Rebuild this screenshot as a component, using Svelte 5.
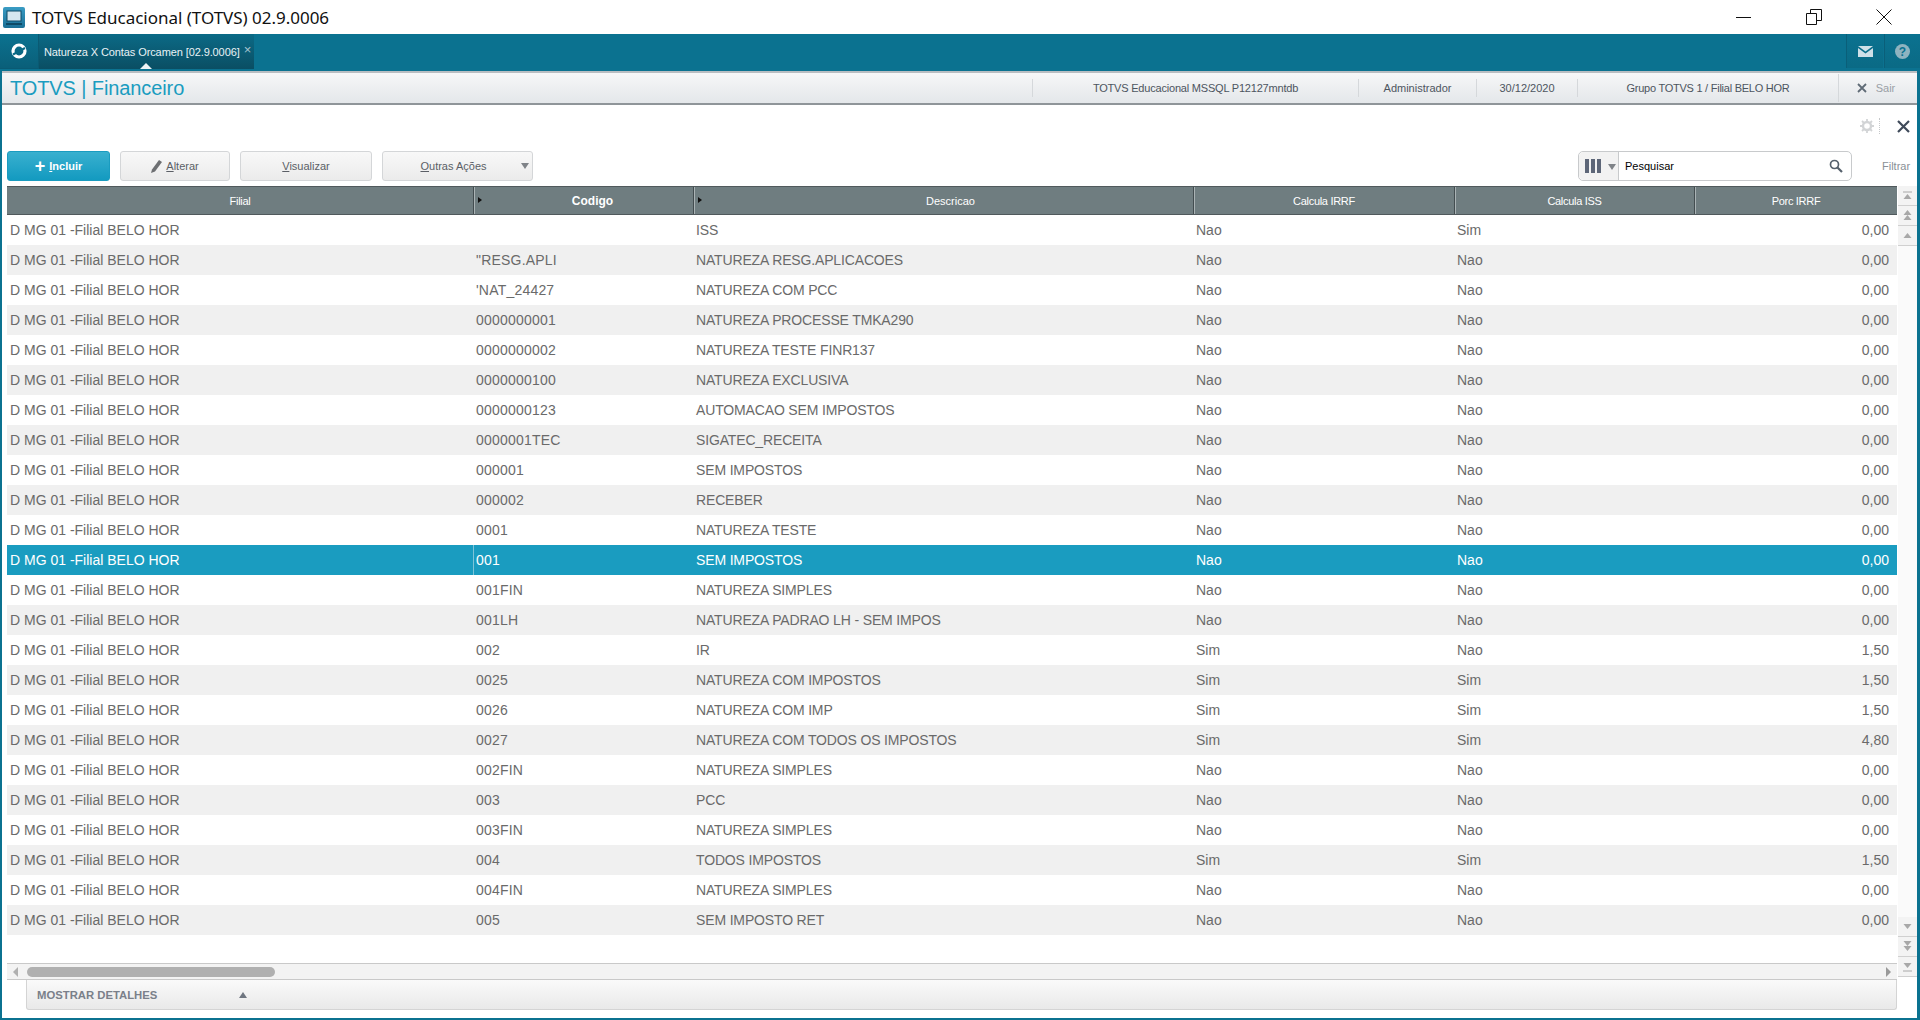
<script>
  const cols = ['Filial', 'Codigo', 'Descricao', 'Calcula IRRF', 'Calcula ISS', 'Porc IRRF'];
  const rows = [
    ['', 'ISS', 'Nao', 'Sim', '0,00'],
    ['"RESG.APLI', 'NATUREZA RESG.APLICACOES', 'Nao', 'Nao', '0,00'],
    ["'NAT_24427", 'NATUREZA COM PCC', 'Nao', 'Nao', '0,00'],
    ['0000000001', 'NATUREZA PROCESSE TMKA290', 'Nao', 'Nao', '0,00'],
    ['0000000002', 'NATUREZA TESTE FINR137', 'Nao', 'Nao', '0,00'],
    ['0000000100', 'NATUREZA EXCLUSIVA', 'Nao', 'Nao', '0,00'],
    ['0000000123', 'AUTOMACAO SEM IMPOSTOS', 'Nao', 'Nao', '0,00'],
    ['0000001TEC', 'SIGATEC_RECEITA', 'Nao', 'Nao', '0,00'],
    ['000001', 'SEM IMPOSTOS', 'Nao', 'Nao', '0,00'],
    ['000002', 'RECEBER', 'Nao', 'Nao', '0,00'],
    ['0001', 'NATUREZA TESTE', 'Nao', 'Nao', '0,00'],
    ['001', 'SEM IMPOSTOS', 'Nao', 'Nao', '0,00'],
    ['001FIN', 'NATUREZA SIMPLES', 'Nao', 'Nao', '0,00'],
    ['001LH', 'NATUREZA PADRAO LH - SEM IMPOS', 'Nao', 'Nao', '0,00'],
    ['002', 'IR', 'Sim', 'Nao', '1,50'],
    ['0025', 'NATUREZA COM IMPOSTOS', 'Sim', 'Sim', '1,50'],
    ['0026', 'NATUREZA COM IMP', 'Sim', 'Sim', '1,50'],
    ['0027', 'NATUREZA COM TODOS OS IMPOSTOS', 'Sim', 'Sim', '4,80'],
    ['002FIN', 'NATUREZA SIMPLES', 'Nao', 'Nao', '0,00'],
    ['003', 'PCC', 'Nao', 'Nao', '0,00'],
    ['003FIN', 'NATUREZA SIMPLES', 'Nao', 'Nao', '0,00'],
    ['004', 'TODOS IMPOSTOS', 'Sim', 'Sim', '1,50'],
    ['004FIN', 'NATUREZA SIMPLES', 'Nao', 'Nao', '0,00'],
    ['005', 'SEM IMPOSTO RET', 'Nao', 'Nao', '0,00'],
  ];
</script>

<div class="win">
  <header class="title">
    <svg class="appicon" width="22" height="21" viewBox="0 0 22 21">
      <defs><linearGradient id="ai" x1="0" y1="0" x2="0" y2="1"><stop offset="0" stop-color="#3a9cc4" /><stop offset="1" stop-color="#1a6f96" /></linearGradient></defs>
      <rect width="22" height="21" rx="2" fill="url(#ai)" />
      <rect x="4" y="4" width="14" height="10" fill="#d5e6ef" stroke="#0e4a66" />
      <path d="M3 17h16" stroke="#0e4a66" stroke-width="2" />
    </svg>
    <span class="apptitle">TOTVS Educacional (TOTVS) 02.9.0006</span>
    <div class="winbtns">
      <svg width="16" height="16" viewBox="0 0 16 16"><path d="M0 8.500h15" stroke="#111" fill="none" /></svg>
      <svg width="16" height="16" viewBox="0 0 16 16"><path d="M.5 4.500h10v11H.5zM4.500 4.500V.5h11v11h-5" stroke="#111" fill="none" /></svg>
      <svg width="16" height="16" viewBox="0 0 16 16"><path d="M.5.5l15 15M15.500.5l-15 15" stroke="#111" fill="none" /></svg>
    </div>
  </header>

  <div class="body">
    <nav class="tabs">
      <div class="logo">
        <svg width="16" height="16" viewBox="0 0 16 16">
          <circle cx="8" cy="8" r="6" fill="none" stroke="#fff" stroke-width="3.200" />
          <path d="M2 11.500L14 5" stroke="#0a6a85" stroke-width="2" />
        </svg>
      </div>
      <div class="tab">
        <span class="tabtext">Natureza X Contas Orcamen [02.9.0006]</span>
        <span class="tabx">×</span>
        <i class="caret"></i>
      </div>
      <div class="navright">
        <div class="navbtn">
          <svg width="15" height="11" viewBox="0 0 15 11"><path d="M0 0h15L7.500 5.500z" fill="#cfe0e8" /><path d="M0 2l7.500 5.500L15 2v9H0z" fill="#cfe0e8" /></svg>
        </div>
        <div class="navbtn">
          <svg width="15" height="15" viewBox="0 0 15 15"><circle cx="7.500" cy="7.500" r="7.500" fill="#8fb3c0" /><text x="7.500" y="12" text-anchor="middle" class="qm">?</text></svg>
        </div>
      </div>
    </nav>

    <div class="module">
      <div class="modname">TOTVS | Financeiro</div>
      <div class="cell c1">TOTVS Educacional MSSQL P12127mntdb</div>
      <div class="cell c2">Administrador</div>
      <div class="cell c3">30/12/2020</div>
      <div class="cell c4">Grupo TOTVS 1 / Filial BELO HOR</div>
      <div class="cell c5">
        <svg width="10" height="10" viewBox="0 0 10 10"><path d="M1 1l8 8M9 1l-8 8" stroke="#5f6b76" stroke-width="1.800" /></svg>
        <span>Sair</span>
      </div>
    </div>

    <div class="tools">
      <svg width="14" height="14" viewBox="0 0 14 14" class="gear">
        <circle cx="7" cy="7" r="4" fill="none" stroke="#d2d4d6" stroke-width="2.400" />
        <path d="M7 0v3M7 11v3M0 7h3M11 7h3M2 2l2 2M10 10l2 2M12 2l-2 2M4 10l-2 2" stroke="#d2d4d6" stroke-width="1.800" />
      </svg>
      <i class="dots"></i>
      <svg width="13" height="13" viewBox="0 0 13 13"><path d="M1 1l11 11M12 1L1 12" stroke="#3f4a5a" stroke-width="2.200" /></svg>
    </div>

    <div class="actions">
      <button class="btn primary"><b class="plus">+</b> <span><u>I</u>ncluir</span></button>
      <button class="btn alterar">
        <svg width="11" height="13" viewBox="0 0 11 13"><path d="M0 13l1-3.500L8 0l3 2-7 9.500z" fill="#6d6f72" /></svg>
        <span><u>A</u>lterar</span>
      </button>
      <button class="btn visualizar"><span><u>V</u>isualizar</span></button>
      <button class="btn outras"><span><u>O</u>utras Ações</span><i class="down"></i></button>
      <div class="search">
        <div class="colpick">
          <span class="bars"><i></i><i></i><i></i></span>
          <i class="down small"></i>
        </div>
        <span class="stext">Pesquisar</span>
        <svg width="14" height="14" viewBox="0 0 14 14"><circle cx="5.500" cy="5.500" r="4" fill="none" stroke="#55606c" stroke-width="1.700" /><path d="M8.500 8.500L13 13" stroke="#55606c" stroke-width="2.200" /></svg>
      </div>
      <span class="filtrar">Filtrar</span>
    </div>

    <div class="main">
      <div class="left">
        <div class="grid">
          <div class="row head">
            {#each cols as c, i}
              <div class="hc" class:bold={i === 1} class:desc={i === 2}>
                {#if i === 1 || i === 2}<i class="hmark"></i>{/if}
                {c}
              </div>
            {/each}
          </div>
          {#each rows as r, i}
            <div class="row data" class:alt={i % 2 === 1} class:sel={i === 11}>
              <div class="dc">D MG 01 -Filial BELO HOR</div>
              <div class="dc code">{r[0]}</div>
              <div class="dc descr">{r[1]}</div>
              <div class="dc">{r[2]}</div>
              <div class="dc">{r[3]}</div>
              <div class="dc num">{r[4]}</div>
            </div>
          {/each}
        </div>
        <div class="hbar">
          <i class="arrl"></i>
          <div class="thumb"></div>
          <i class="arrr"></i>
        </div>
      </div>
      <div class="vbar">
        <div class="vgroup">
          <button class="vb"><svg width="11" height="10" viewBox="0 0 11 10"><path d="M1 1h9" stroke="#a8a8a8" /><path d="M5.500 3l4 5h-8z" fill="#a8a8a8" /></svg></button>
          <button class="vb"><svg width="11" height="11" viewBox="0 0 11 11"><path d="M5.500 0l4 5h-8zM5.500 5l4 5h-8z" fill="#a8a8a8" /></svg></button>
          <button class="vb"><svg width="11" height="7" viewBox="0 0 11 7"><path d="M5.500 1l4 5h-8z" fill="#a8a8a8" /></svg></button>
        </div>
        <div class="vgroup">
          <button class="vb"><svg width="11" height="7" viewBox="0 0 11 7"><path d="M5.500 6l4-5h-8z" fill="#a8a8a8" /></svg></button>
          <button class="vb"><svg width="11" height="11" viewBox="0 0 11 11"><path d="M5.500 5l4-5h-8zM5.500 10l4-5h-8z" fill="#a8a8a8" /></svg></button>
          <button class="vb"><svg width="11" height="10" viewBox="0 0 11 10"><path d="M5.500 6l4-5h-8z" fill="#a8a8a8" /><path d="M1 9h9" stroke="#a8a8a8" /></svg></button>
        </div>
      </div>
    </div>

    <div class="details">
      <div class="dpanel">
        <span class="dtext">MOSTRAR DETALHES</span>
        <i class="dup"></i>
      </div>
    </div>
  </div>
</div>

<style>
  :global(body) { margin: 0; background: #fff; overflow: hidden; }
  .win { width: 1920px; height: 1020px; display: flex; flex-direction: column; font-family: "Liberation Sans", Arial, sans-serif; overflow: hidden; }

  .title { height: 34px; flex: none; display: flex; align-items: center; padding-left: 3px; background: #fff; box-sizing: border-box; }
  .appicon { margin-top: 1px; }
  .apptitle { font-family: "Noto Sans", sans-serif; font-size: 17px; color: #111; margin-left: 7px; white-space: nowrap; letter-spacing: -0.02px; }
  .winbtns { margin-left: auto; display: flex; gap: 54px; margin-right: 28px; align-items: center; }

  .body { flex: 1; min-height: 0; display: flex; flex-direction: column; border: solid #0b7290; border-width: 0 3px 2px 2px; }

  .tabs { height: 37px; flex: none; background: #0b7290; display: flex; margin: 0 -3px 0 -2px; }
  .logo { width: 38px; height: 34px; display: flex; align-items: center; justify-content: center; background: linear-gradient(#0b7290, #0a5f79); border-right: 1px solid #0a5a73; border-bottom: 1px solid #0a5a73; box-sizing: content-box; }
  .tab { position: relative; width: 215px; height: 35px; margin-left: 0; padding-left: 5px; display: flex; align-items: center; background: linear-gradient(#0b6a86, #0a4e63); color: #e9f2f5; font-size: 11px; white-space: nowrap; box-sizing: border-box; }
  .tabtext { letter-spacing: -0.1px; }
  .tabx { margin-left: 4px; color: #a6c4cf; font-size: 13px; margin-top: -4px; }
  .caret { position: absolute; bottom: 0; left: 101px; border: 6px solid transparent; border-top: 0; border-bottom: 6px solid #eef2f4; }
  .navright { margin-left: auto; display: flex; gap: 1px; }
  .navbtn { width: 37px; height: 34px; display: flex; align-items: center; justify-content: center; background: linear-gradient(#0b7290, #0a6a85); border-left: 1px solid #0a5f79; box-sizing: border-box; }
  .navbtn:last-child { width: 36px; }
  .qm { font: bold 12px "Liberation Sans", sans-serif; fill: #0b7290; }

  .module { height: 34px; flex: none; display: flex; align-items: center; background: linear-gradient(#f6f7f8, #e4e7ea); border-top: 2px solid #b9bec2; border-bottom: 2px solid #8f9599; color: #4d5560; font-size: 11px; box-sizing: border-box; }
  .modname { flex: 1; font-size: 20px; color: #1a9cc0; padding-left: 8px; letter-spacing: -0.1px; }
  .cell { height: 18px; display: flex; align-items: center; justify-content: center; border-left: 1px solid #d5d8db; white-space: nowrap; box-sizing: border-box; }
  .c1 { width: 326px; letter-spacing: -0.2px; }
  .c2 { width: 118px; }
  .c3 { width: 101px; }
  .c4 { width: 261px; letter-spacing: -0.25px; }
  .c5 { width: 79px; gap: 9px; color: #9aa0a6; height: 28px; padding-right: 4px; }

  .tools { height: 42px; flex: none; display: flex; align-items: center; justify-content: flex-end; gap: 8px; padding-right: 7px; box-sizing: border-box; }
  .gear { margin-right: -3px; }
  .dots { width: 0; height: 16px; border-left: 1px dotted #c5c7c9; margin-right: 9px; }

  .actions { height: 30px; flex: none; display: flex; align-items: stretch; padding-left: 5px; margin-top: 4px; }
  .btn { border: 1px solid #d4d6d8; border-radius: 3px; background: linear-gradient(#f8f8f8, #ebebeb); color: #5b5f66; font: 11px "Liberation Sans", Arial, sans-serif; display: flex; align-items: center; justify-content: center; gap: 4px; padding: 0; margin: 0 10px 0 0; box-sizing: border-box; }
  .primary { width: 103px; background: linear-gradient(#39b0cf, #139ac0); border-color: #1a9cc0; color: #fff; font-weight: bold; }
  .plus { font-size: 18px; font-weight: bold; line-height: 14px; }
  .alterar { width: 110px; }
  .visualizar { width: 132px; }
  .outras { width: 151px; position: relative; padding-right: 8px; }
  .down { position: absolute; right: 3px; top: 11px; border: 4px solid transparent; border-top: 6px solid #7f8388; border-bottom: 0; }
  .search { margin-left: auto; width: 274px; display: flex; align-items: center; border: 1px solid #c8cacc; border-radius: 5px; box-sizing: border-box; padding-right: 8px; background: #fff; color: #000; font-size: 11px; }
  .colpick { position: relative; width: 40px; height: 100%; border-right: 1px solid #c8cacc; background: #f2f2f2; border-radius: 5px 0 0 5px; display: flex; align-items: center; padding-left: 6px; box-sizing: border-box; }
  .bars { display: flex; gap: 2px; }
  .bars i { width: 4px; height: 14px; background: #5d6678; }
  .down.small { right: 2px; top: 12px; }
  .stext { flex: 1; padding-left: 6px; }
  .filtrar { width: 27px; margin-left: 30px; margin-right: 8px; align-self: center; color: #8a9096; font-size: 11px; white-space: nowrap; }

  .main { height: 794px; flex: none; display: flex; margin-left: 5px; margin-top: 5px; }
  .left { width: 1890px; flex: none; display: flex; flex-direction: column; }
  .grid { flex: 1; min-height: 0; }
  .row { display: grid; grid-template-columns: 466px 220px 500px 261px 240px 203px; }
  .head { height: 29px; background: #6f7d80; border-top: 1px solid #50595c; border-bottom: 1px solid #50595c; box-sizing: border-box; color: #fff; font-size: 11px; letter-spacing: -0.3px; }
  .hc { position: relative; display: flex; align-items: center; justify-content: center; border-left: 1px solid #434d50; box-sizing: border-box; box-shadow: inset 1px 0 #aab3b5; }
  .hc:first-child { border-left: 0; box-shadow: none; }
  .bold { font-weight: bold; font-size: 12px; letter-spacing: 0; padding-left: 18px; }
  .desc { letter-spacing: 0; padding-left: 14px; }
  .hmark { position: absolute; left: 4px; top: 10px; border: 3.500px solid transparent; border-left: 4px solid #111; border-right: 0; }
  .data { height: 30px; font-size: 14px; color: #6a6a6a; background: #fff; }
  .data.alt { background: #f0f0f0; }
  .data.sel { background: #1a9cc0; color: #fff; }
  .data.sel .dc:nth-child(2) { box-shadow: inset 1px 0 #7fc4d8; }
  .dc { display: flex; align-items: center; padding-left: 3px; white-space: nowrap; overflow: hidden; box-sizing: border-box; }
  .code { letter-spacing: 0.2px; }
  .descr { letter-spacing: -0.15px; }
  .dc.num { justify-content: flex-end; padding-right: 8px; padding-left: 0; }

  .vbar { width: 19px; flex: none; margin-left: 1px; display: flex; flex-direction: column; justify-content: space-between; height: 791px; background: #fafafa; }
  .vgroup { display: flex; flex-direction: column; }
  .vb { height: 20px; width: 19px; padding: 0; margin: 0; border: 0; border-bottom: 1px solid #d0d0d0; background: #f3f3f3; display: flex; align-items: center; justify-content: center; box-sizing: border-box; }

  .hbar { height: 17px; flex: none; position: relative; background: #f3f3f3; border-top: 1px solid #c9c9c9; border-bottom: 1px solid #c9c9c9; box-sizing: border-box; }
  .arrl { position: absolute; left: 6px; top: 3px; border: 5px solid transparent; border-right: 5px solid #b0b0b0; border-left: 0; }
  .arrr { position: absolute; right: 6px; top: 3px; border: 5px solid transparent; border-left: 5px solid #9a9a9a; border-right: 0; }
  .thumb { position: absolute; left: 20px; top: 3px; width: 248px; height: 10px; border-radius: 5px; background: #b0b0b0; }

  .details { flex: 1; min-height: 0; padding-left: 24px; display: flex; box-sizing: border-box; }
  .dpanel { width: 1871px; height: 30px; border: 1px solid #d4d4d4; border-top: 0; border-radius: 0 0 3px 3px; background: linear-gradient(#fafafa, #e9e9e9); display: flex; align-items: center; box-sizing: border-box; position: relative; }
  .dtext { margin-left: 10px; font-size: 11.300px; font-weight: bold; color: #7a808a; white-space: nowrap; }
  .dup { position: absolute; left: 212px; top: 12px; border: 4px solid transparent; border-bottom: 6px solid #6f7680; border-top: 0; }
</style>
